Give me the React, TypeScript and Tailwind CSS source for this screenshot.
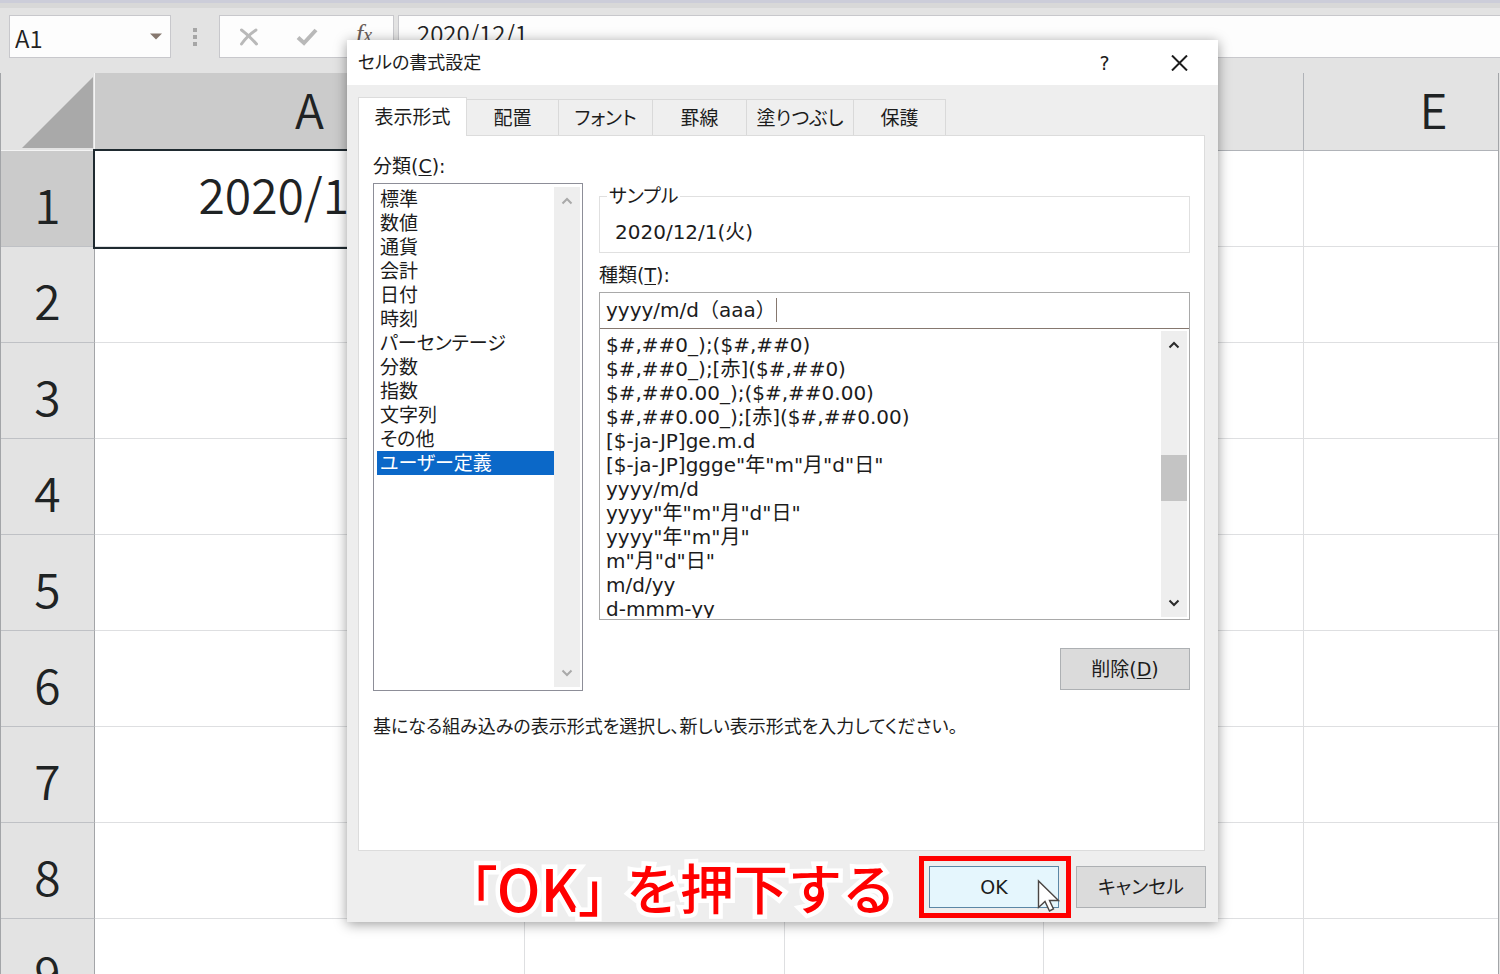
import React, { useState } from 'react';

const COLUMNS = ['A', 'B', 'C', 'D', 'E'];
const ROWS = [1, 2, 3, 4, 5, 6, 7, 8, 9];

const TABS = [
  { label: '表示形式', width: 'w-[109px]' },
  { label: '配置', width: 'w-[92px]' },
  { label: 'フォント', width: 'w-[94px]' },
  { label: '罫線', width: 'w-[94px]' },
  { label: '塗りつぶし', width: 'w-[107px]' },
  { label: '保護', width: 'w-[92px]' },
];

const CATEGORIES = [
  '標準', '数値', '通貨', '会計', '日付', '時刻',
  'パーセンテージ', '分数', '指数', '文字列', 'その他', 'ユーザー定義',
];

const FORMATS = [
  '$#,##0_);($#,##0)',
  '$#,##0_);[赤]($#,##0)',
  '$#,##0.00_);($#,##0.00)',
  '$#,##0.00_);[赤]($#,##0.00)',
  '[$-ja-JP]ge.m.d',
  '[$-ja-JP]ggge"年"m"月"d"日"',
  'yyyy/m/d',
  'yyyy"年"m"月"d"日"',
  'yyyy"年"m"月"',
  'm"月"d"日"',
  'm/d/yy',
  'd-mmm-yy',
];

const Chevron: React.FC<{ down?: boolean }> = ({ down }) => (
  <svg width="12" height="8" viewBox="0 0 12 8" fill="none" stroke="currentColor" strokeWidth="2">
    <path d={down ? 'M1.5 1.5 L6 6 L10.5 1.5' : 'M1.5 6.5 L6 2 L10.5 6.5'} />
  </svg>
);

const ScrollBar: React.FC<{ muted?: boolean; children?: React.ReactNode }> = ({ muted, children }) => (
  <div className={`flex w-[26px] shrink-0 flex-col justify-between bg-[#eeeeee] ${muted ? 'text-[#a9a9a9]' : 'text-[#2b2b2b]'}`}>
    <button type="button" aria-label="上へ" className="flex h-7 items-center justify-center"><Chevron /></button>
    {children}
    <button type="button" aria-label="下へ" className="flex h-7 items-center justify-center"><Chevron down /></button>
  </div>
);

const FormulaBar = () => (
  <div className="flex h-[43px] items-stretch text-2xl font-[350] text-[#222]">
    <div className="ml-[9px] flex w-[162px] items-center border border-[#c8c8cc] bg-[#fdfdfd] pr-2">
      <input aria-label="名前ボックス" defaultValue="A1" className="w-full min-w-0 bg-transparent pt-[2px] pl-[5px] outline-none" />
      <svg width="12" height="7" viewBox="0 0 12 7" className="shrink-0"><path d="M0 0.5 H12 L6 6.5 Z" fill="#86786f" /></svg>
    </div>
    <div className="flex w-12 items-center justify-center">
      <svg width="4" height="18" viewBox="0 0 4 18" fill="#a6a6a6">
        <rect width="4" height="4" /><rect y="7" width="4" height="4" /><rect y="14" width="4" height="4" />
      </svg>
    </div>
    <div className="flex w-[175px] items-center border border-[#c8c8cc] bg-[#fdfdfd]">
      <button type="button" aria-label="キャンセル" className="flex w-[58px] justify-center">
        <svg width="20" height="18" viewBox="0 0 20 18" fill="none" stroke="#b9b9b9" strokeWidth="3" strokeLinecap="round">
          <path d="M2.5 2 C8 6 13 11 17.5 16" />
          <path d="M17 2 C11 6 6 11 2.5 16" />
        </svg>
      </button>
      <button type="button" aria-label="入力" className="flex w-[58px] justify-center">
        <svg width="22" height="18" viewBox="0 0 22 18" fill="none" stroke="#b9b9b9" strokeWidth="4">
          <path d="M2 9.5 L8 15 L20 2" />
        </svg>
      </button>
      <button type="button" aria-label="関数の挿入" className="w-[58px] pb-1 font-['Liberation_Serif',serif] text-[26px] leading-7 font-normal text-[#6b5f5a] italic">
        f<span className="text-xl">x</span>
      </button>
    </div>
    <input
      aria-label="数式バー"
      defaultValue="2020/12/1"
      className="ml-1 min-w-0 flex-1 border-y border-l border-[#c8c8cc] bg-[#fdfdfd] pb-2 pl-[18px] outline-none"
    />
  </div>
);

const Sheet = () => (
  <div className="mt-[15px] mr-px overflow-hidden border-x border-[#a3a5a8]">
    <table className="w-[1562px] table-fixed border-separate border-spacing-0 text-5xl font-[350] text-[#1f2324]">
      <colgroup>
        <col className="w-[94px]" />
        <col className="w-[430px]" />
        <col className="w-[260px]" />
        <col className="w-[259px]" />
        <col className="w-[260px]" />
        <col className="w-[260px]" />
      </colgroup>
      <thead>
        <tr className="h-[78px]">
          <th className="border-r border-b border-[#f4f4f4] bg-[#e3e3e3] p-0 pr-px align-bottom">
            <svg width="71" height="71" viewBox="0 0 71 71" className="mb-[2px] ml-auto"><path d="M71 0 V71 H0 Z" fill="#a9a9a9" /></svg>
          </th>
          {COLUMNS.map(col => (
            <th
              key={col}
              scope="col"
              className={`border-r border-b border-[#b0b3b8] p-0 pb-2 text-center font-[350] ${col === 'A' ? 'bg-[#cbcbcb]' : 'bg-[#e3e3e3]'}`}
            >
              {col}
            </th>
          ))}
        </tr>
      </thead>
      <tbody>
        {ROWS.map(row => (
          <tr key={row} className="h-24">
            <th
              scope="row"
              className={`border-r border-b border-r-[#a3a5a8] border-b-[#bfc1c5] p-0 pt-2 text-center font-[350] ${row === 1 ? 'bg-[#cbcbcb]' : 'bg-[#e3e3e3]'}`}
            >
              {row}
            </th>
            {COLUMNS.map(col => {
              const active = row === 1 && col === 'A';
              return (
                <td
                  key={col}
                  className={`border-r border-b border-[#dedfe1] bg-white p-0 pb-3 text-center ${active ? 'outline-2 outline-[#1f2a30]' : ''}`}
                >
                  {active ? '2020/12/1' : ''}
                </td>
              );
            })}
          </tr>
        ))}
      </tbody>
    </table>
  </div>
);

const FormatDialog = () => {
  const [tab, setTab] = useState('表示形式');
  const [category, setCategory] = useState('ユーザー定義');

  return (
    <div
      role="dialog"
      aria-labelledby="dialog-title"
      className="absolute top-10 left-[347px] w-[871px] bg-[#eeeeee] font-['DejaVu_Sans','Noto_Sans_CJK_JP',sans-serif] text-[19px] leading-6 text-[#1c1c1c] shadow-[0_2px_12px_rgba(0,0,0,0.4)] [font-feature-settings:'palt']"
    >
      {/* Title bar */}
      <div className="flex h-[45px] items-center bg-white pl-[11px]">
        <h1 id="dialog-title" className="flex-1 text-lg leading-6">セルの書式設定</h1>
        <button type="button" aria-label="ヘルプ" className="w-[73px] text-center">?</button>
        <button type="button" aria-label="閉じる" className="flex w-[77px] justify-center">
          <svg width="17" height="16" viewBox="0 0 17 16" stroke="#1c1c1c" strokeWidth="2"><path d="M1 0.5 L16 15.5 M16 0.5 L1 15.5" /></svg>
        </button>
      </div>

      <div className="pt-3 pr-[13px] pl-[11px]">
        <div role="tablist" className="flex items-end">
          {TABS.map(t => (
            <button
              key={t.label}
              type="button"
              role="tab"
              aria-selected={t.label === tab}
              onClick={() => setTab(t.label)}
              className={`${t.width} ${t.label === tab ? 'z-10 -mb-px h-[39px] border-x border-t border-[#dcdcdc] bg-white' : 'h-9 border-t border-r border-[#d9d9d9] bg-[#efefef]'}`}
            >
              {t.label}
            </button>
          ))}
        </div>

        <div role="tabpanel" className="h-[716px] border border-[#dcdcdc] bg-white px-[14px] pt-[18px]">
          <div className="flex items-end gap-4">
            {/* Category list */}
            <div className="w-[210px]">
              <div id="category-label">分類(<u className="underline-offset-2">C</u>):</div>
              <div className="mt-[5px] flex h-[508px] border border-[#8d8e98] p-[3px] pr-[2px]">
                <ul role="listbox" aria-labelledby="category-label" className="flex-1">
                  {CATEGORIES.map(c => (
                    <li
                      key={c}
                      role="option"
                      aria-selected={c === category}
                      onClick={() => setCategory(c)}
                      className={`pl-[3px] whitespace-nowrap ${c === category ? 'bg-[#0b68c8] text-white' : ''}`}
                    >
                      {c}
                    </li>
                  ))}
                </ul>
                <ScrollBar muted />
              </div>
            </div>

            <div className="flex-1 pb-px">
              <fieldset className="border border-[#e0e0e0] px-[15px] pt-3 pb-2">
                <legend className="-ml-2 px-[2px]">サンプル</legend>
                <div className="text-xl leading-6">2020/12/1(火)</div>
              </fieldset>

              <label htmlFor="format-code" className="mt-[10px] block">種類(<u className="underline-offset-2">T</u>):</label>
              <div className="mt-[5px] border border-[#a9a9a9] text-xl leading-6">
                <div className="flex h-9 items-center border-b border-[#86786f] pb-[2px] pl-[6px]">
                  <input
                    id="format-code"
                    defaultValue="yyyy/m/d（aaa）"
                    className="field-sizing-content outline-none [font-feature-settings:normal]"
                  />
                  <span className="h-6 w-px bg-[#86786f]" />
                </div>
                <div className="flex h-[290px] py-[2px] pr-[2px]">
                  <ul role="listbox" aria-label="種類" className="h-[287px] flex-1 overflow-hidden pt-[2px]">
                    {FORMATS.map(f => (
                      <li key={f} role="option" aria-selected={false} className="pl-[6px] whitespace-nowrap">{f}</li>
                    ))}
                  </ul>
                  <ScrollBar>
                    <div className="mt-2 h-[46px] bg-[#c4c4c4]" />
                  </ScrollBar>
                </div>
              </div>

              <button type="button" className="mt-7 ml-auto block h-[42px] w-[130px] border border-[#adb0b3] bg-[#dbdbdb]">
                削除(<u className="underline-offset-2">D</u>)
              </button>
            </div>
          </div>

          <p className="mt-6 text-lg leading-6">基になる組み込みの表示形式を選択し、新しい表示形式を入力してください。</p>
        </div>
      </div>

      {/* Footer */}
      <div className="flex h-[71px] items-center justify-end gap-[17px] pt-px pr-3">
        <div className="mr-4 flex items-center gap-5 font-['Noto_Sans_CJK_JP',sans-serif] text-[54px] leading-none font-medium text-[#ff0000] [-webkit-text-stroke:9px_#fff] [paint-order:stroke_fill] [stroke-linejoin:round]">
          <span className="whitespace-nowrap">「<span className="text-[58px]">OK</span>」</span>
          <span className="whitespace-nowrap [font-feature-settings:normal]">を押下する</span>
        </div>
        <div className="relative">
          <button type="button" className="block h-[42px] w-[130px] border border-[#5b87a6] bg-[#e5f6fd]">OK</button>
          <div className="pointer-events-none absolute -inset-y-[10px] -right-3 -left-[10px] border-5 border-[#ff0000]" />
          <svg width="24" height="34" viewBox="0 0 24 34" className="pointer-events-none absolute top-[13px] left-[108px]">
            <path
              d="M1.5 2 V28.5 L8 22.5 L12.5 32 L16.5 30 L12.5 21.5 H21.5 Z"
              fill="#fff"
              stroke="#4a4543"
              strokeWidth="1.4"
            />
          </svg>
        </div>
        <button type="button" className="h-[42px] w-[130px] border border-[#adb0b3] bg-[#dbdbdb]">キャンセル</button>
      </div>
    </div>
  );
};

const App = () => (
  <div className="relative h-screen overflow-hidden bg-[#e3e3e3] font-['Noto_Sans_CJK_JP',sans-serif]">
    <div className="h-[3px] bg-[#cccdd9]" />
    <div className="h-[5px] bg-[#d8d8d8]" />
    <div className="h-[7px]" />
    <FormulaBar />
    <Sheet />
    <FormatDialog />
  </div>
);

export default App;
